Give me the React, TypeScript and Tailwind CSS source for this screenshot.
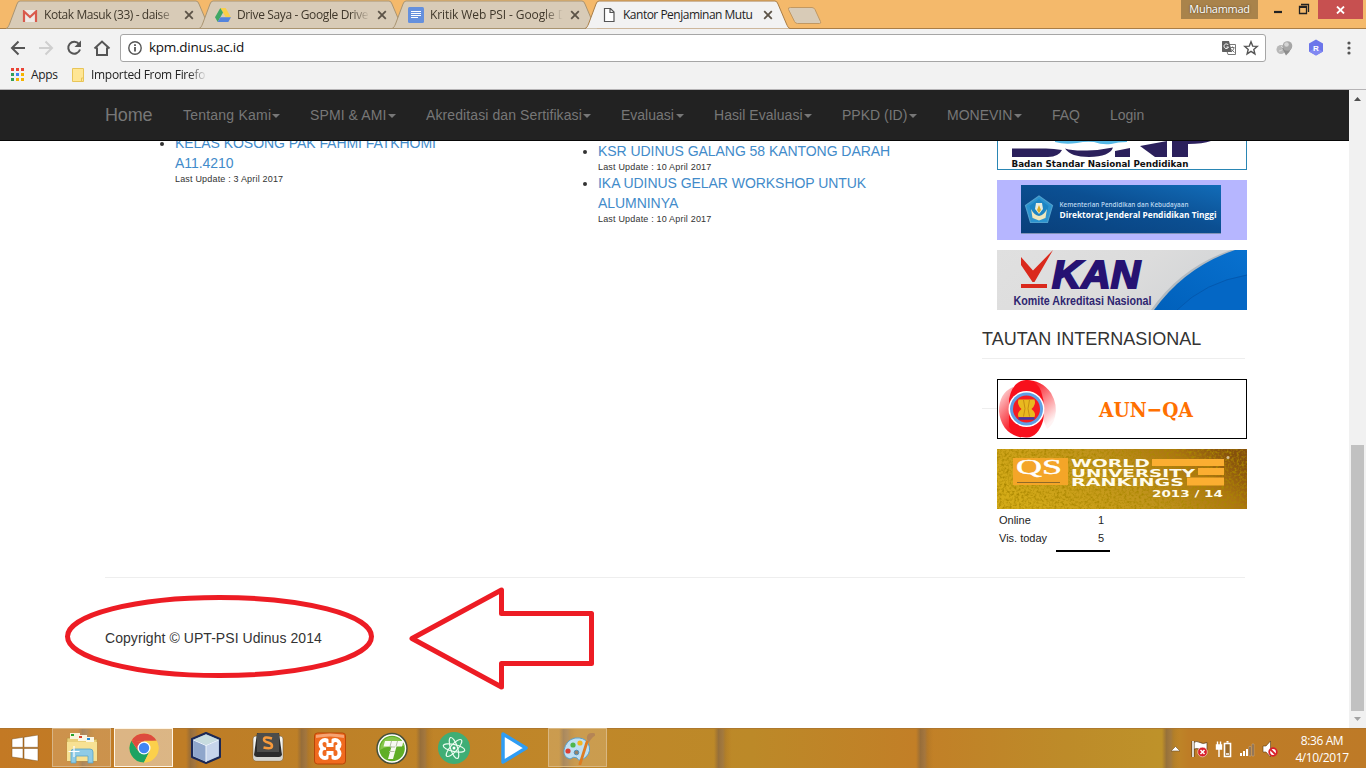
import type { ReactNode } from "react";

const UI = "font-['Open_Sans','Noto_Sans',sans-serif]";
const PAGE = "font-['Liberation_Sans',Arial,sans-serif]";

function Close() {
  return (
    <svg width="10" height="10" viewBox="0 0 10 10" className="shrink-0">
      <path d="M1.2 1.2 8.8 8.8M8.8 1.2 1.2 8.8" stroke="#5c5347" strokeWidth="1.8" />
    </svg>
  );
}

function Tab({ icon, title, track, active }: { icon: ReactNode; title: string; track: string; active?: boolean }) {
  return (
    <div className={`relative h-[29px] w-[193px] shrink-0 ${active ? "z-10" : ""}`}>
      <svg className="absolute top-0 left-0" width="208" height="29" viewBox="0 0 208 29">
        <path
          d="M0 28.5C2 28 2.500 26 3.500 24L11 4Q12 1 14 1H190Q192 1 193 4L201.500 24C202.500 26 203 28 205 28.500Z"
          fill={active ? "#f2f2f2" : "#d8cbb7"}
          stroke={active ? "none" : "#a99471"}
          strokeWidth="1"
        />
        {active && (
          <path
            d="M0 28.500C2 28 2.500 26 3.500 24L11 4Q12 1 14 1H190Q192 1 193 4L201.500 24C202.500 26 203 28 205 28.500"
            fill="none"
            stroke="#a97d46"
          />
        )}
      </svg>
      <div className="relative flex h-[29px] items-center pl-4">
        <div className="flex w-[22px] shrink-0 justify-start">{icon}</div>
        <div
          className={`w-[134px] text-[12px] leading-[16px] whitespace-nowrap ${track} ${active ? "text-[#1e1e1e]" : "text-[#40382b] [mask-image:linear-gradient(to_right,black_85%,transparent_99%)]"}`}
        >
          {title}
        </div>
        <div className="ml-[6px]">
          <Close />
        </div>
      </div>
    </div>
  );
}

function TabStrip() {
  return (
    <div className="flex h-[29px] justify-between border-b border-[#a97d46] bg-[#f4b96b]">
      <div className="flex pl-[6px]">
        <Tab
          title="Kotak Masuk (33) - daise"
          track="tracking-[-0.42px]"
          icon={
            <svg width="16" height="12" viewBox="0 0 16 12" className="mt-[2px]">
              <rect x="1" y="0" width="14" height="12" rx="1" fill="#eee9e6" />
              <path d="M2 12V1.500L8 7l6-5.500V12" fill="none" stroke="#d9594c" strokeWidth="2.200" />
            </svg>
          }
        />
        <Tab
          title="Drive Saya - Google Drive"
          track="tracking-[-0.37px]"
          icon={
            <svg width="16" height="14" viewBox="0 0 16 14">
              <path d="M5.300 0h5.400L16 9.200h-5.300z" fill="#f9cf4a" />
              <path d="M5.300 0 8 4.600 2.700 14 0 9.200z" fill="#3fa765" />
              <path d="M5.400 9.200H16L13.300 14H2.700z" fill="#5484dd" />
            </svg>
          }
        />
        <Tab
          title="Kritik Web PSI - Google D"
          track="tracking-[-0.1px]"
          icon={
            <svg width="16" height="16" viewBox="0 0 16 16">
              <rect width="16" height="16" rx="1.500" fill="#6590dd" />
              <path d="M3 4.500h10M3 6.500h10M3 8.500h10M3 10.500h7" stroke="#fff" />
            </svg>
          }
        />
        <Tab
          active
          title="Kantor Penjaminan Mutu"
          track="tracking-[-0.5px]"
          icon={
            <svg width="16" height="16" viewBox="0 0 16 16" className="ml-[1px]">
              <path d="M2.500 1.500H8.500L12 5v9.500H2.500zM8 1.500V5.500h4" fill="#fff" stroke="#555" strokeWidth="1.200" />
            </svg>
          }
        />
        <svg width="36" height="18" viewBox="0 0 36 18" className="mt-[7px] ml-[9px]">
          <path d="M3.500.5H25Q27 .500 28 2.500L33.500 14.500Q34.500 16.500 32.500 16.500H10.500Q8.500 16.500 7.500 14.500L1.500 2.500Q.5.500 3.500.5Z" fill="#d8cbb7" stroke="#c19862" />
        </svg>
      </div>
      <div className="flex items-start">
        <div className={`${UI} flex h-[19px] w-[77px] items-center justify-center bg-[#a9834b] text-[11px] font-medium tracking-[-0.3px] text-white [text-shadow:0_0_2px_#4d3b1f]`}>
          Muhammad
        </div>
        <svg width="60" height="19" viewBox="0 0 60 19">
          <path d="M16 12h8" stroke="#222" strokeWidth="2.200" />
          <path d="M41.500 6.500h7v7h-7zM43 4.500h7.500V12" fill="none" stroke="#222" strokeWidth="1.300" />
          <path d="M41 7h8" stroke="#222" strokeWidth="2" />
        </svg>
        <div className="mr-[3px] flex h-[19px] w-[45px] items-center justify-center bg-[#c75050]">
          <svg width="9" height="8" viewBox="0 0 9 8">
            <path d="M1 .5 8 7.500M8 .5 1 7.500" stroke="#fff" strokeWidth="1.800" />
          </svg>
        </div>
      </div>
    </div>
  );
}

function Toolbar() {
  return (
    <div className="flex h-[37px] items-center bg-[#f2f2f2] pl-[10px]">
      <svg width="110" height="18" viewBox="0 0 110 18" fill="none" strokeWidth="2" className="shrink-0">
        <path d="M15 9H2.500M8.500 2.500 2 9l6.500 6.500" stroke="#555" />
        <path d="M29 9h12.500M35.500 2.500 42 9l-6.500 6.500" stroke="#cfcfcf" />
        <path d="M69 5A6 6 0 1 0 70 10.500" stroke="#555" />
        <path d="M71 1.500V8h-6.500z" fill="#555" />
        <path d="M84.500 9.500 92 2.500l7.500 7M87 8.500V16h10V8.500" stroke="#555" />
      </svg>
      <div className="flex h-[28px] w-[1146px] items-center rounded-[3px] border border-[#a6a6a6] bg-white pr-[6px] pl-[7px]">
        <svg width="14" height="14" viewBox="0 0 14 14">
          <circle cx="7" cy="7" r="6.200" fill="none" stroke="#555" strokeWidth="1.400" />
          <path d="M7 6v4.500M7 3.200v1.700" stroke="#555" strokeWidth="1.800" />
        </svg>
        <span className="-mt-[2px] ml-[7px] text-[13.500px] leading-[20px] tracking-[-0.26px] text-[#111]">kpm.dinus.ac.id</span>
        <svg width="16" height="16" viewBox="0 0 16 16" className="ml-auto">
          <path d="M8 4.500h6.500v10H7l-1-3" fill="#fff" stroke="#777" />
          <path d="M1.500 1H8l3 11H1.500Q1 12 1 11V2Q1 1 1.500 1Z" fill="#616161" />
          <path d="M7.300 5A2.300 2.300 0 1 0 7.500 7H5.500" fill="none" stroke="#fff" />
          <path d="M9.500 7.500h4M11.500 6.500v1M13 8q-1 3-3 4M10.500 9.500l3 3" fill="none" stroke="#666" strokeWidth=".9" />
        </svg>
        <svg width="16" height="16" viewBox="0 0 16 16" className="ml-[6px]">
          <path d="m8 1.800 1.700 4.300 4.600.3-3.500 3 1.100 4.500L8 11.400l-3.900 2.500 1.100-4.500-3.500-3 4.600-.3z" fill="none" stroke="#555" strokeWidth="1.400" />
        </svg>
      </div>
      <svg width="17" height="16" viewBox="0 0 17 16" className="ml-[10px]">
        <circle cx="5" cy="9.500" r="4.500" fill="#b8b8b8" />
        <path d="M5 6q2 1 1.500 3T3 11" fill="none" stroke="#ddd" />
        <path d="M6 8 16 7q-2 5-6 8.500Q8 12 6 8Z" fill="#8d8d8d" />
        <circle cx="11.500" cy="6" r="4.800" fill="#a6a6a6" />
        <circle cx="10.500" cy="4.500" r="2.300" fill="#d5d5d5" />
      </svg>
      <svg width="16" height="17" viewBox="0 0 16 17" className="ml-[15px]">
        <path d="M8 .5 15 4.500v8L8 16.500 1 12.500v-8z" fill="#6b75ea" />
        <path d="M1 12.500 8 8.500l7 4L8 16.500z" fill="#8188f2" />
        <text x="8" y="11.500" textAnchor="middle" fontSize="8" fontWeight="700" fill="#fff" fontFamily="Liberation Sans">R</text>
      </svg>
      <svg width="4" height="14" viewBox="0 0 4 14" className="ml-[23px]">
        <circle cx="2" cy="2" r="1.600" fill="#555" />
        <circle cx="2" cy="7" r="1.600" fill="#555" />
        <circle cx="2" cy="12" r="1.600" fill="#555" />
      </svg>
    </div>
  );
}

function Bookmarks() {
  const colors = ["#ea4335", "#ea4335", "#ea4335", "#34a058", "#4285f4", "#f5b400", "#34a058", "#f5b400", "#f5b400"];
  return (
    <div className="flex h-[24px] items-start border-b border-[#b6b4b6] bg-[#f2f2f2] pl-[11px] text-[12px] leading-[18px] text-[#222]">
      <svg width="13" height="13" viewBox="0 0 13 13" className="mt-[2px]">
        {colors.map((c, i) => (
          <rect key={i} x={(i % 3) * 5} y={Math.floor(i / 3) * 5} width="3" height="3" fill={c} />
        ))}
      </svg>
      <span className="ml-[7px] w-[27px] tracking-[-0.3px] whitespace-nowrap">Apps</span>
      <svg width="12" height="14" viewBox="0 0 12 14" className="mt-[2px] ml-[14px]">
        <path d="M.5.500h11v13H.5z" fill="#ffe694" stroke="#e8c558" />
        <path d="M9.500 13.500v-3.500h2" fill="none" stroke="#e8c558" />
      </svg>
      <span className="ml-[7px] w-[116px] tracking-[-0.3px] whitespace-nowrap [mask-image:linear-gradient(to_right,black_84%,transparent_100%)]">
        Imported From Firefo
      </span>
    </div>
  );
}

const NAV: [string, string, boolean][] = [
  ["Tentang Kami", "w-[97px] tracking-[0.22px]", true],
  ["SPMI & AMI", "w-[86px] tracking-[0.1px]", true],
  ["Akreditasi dan Sertifikasi", "w-[165px] tracking-[0.1px]", true],
  ["Evaluasi", "w-[63px]", true],
  ["Hasil Evaluasi", "w-[98px] tracking-[0.05px]", true],
  ["PPKD (ID)", "w-[75px]", true],
  ["MONEVIN", "w-[75px]", true],
  ["FAQ", "w-[28px]", false],
  ["Login", "w-[36px]", false],
];

function Navbar() {
  return (
    <nav className="flex h-[51px] shrink-0 items-center border-b border-[#080808] bg-[#222] pl-[105px] text-[14px] text-[#777]">
      <a className="w-[78px] text-[18px] leading-[20px] tracking-[-0.15px]">Home</a>
      <div className="flex gap-[30px]">
        {NAV.map(([label, w, caret]) => (
          <a key={label} className={`flex ${w} items-center justify-between leading-[20px] whitespace-nowrap`}>
            {label}
            {caret && <i className="mt-[2px] border-x-4 border-t-4 border-x-transparent border-t-[#777]" />}
          </a>
        ))}
      </div>
    </nav>
  );
}

function NewsItem({ lines, date }: { lines: string[]; date: string }) {
  return (
    <li>
      <a className="block tracking-[-0.05px] text-[#428bca]">
        {lines.map((l) => (
          <span key={l} className="block whitespace-nowrap">{l}</span>
        ))}
      </a>
      <p className="h-[12px] pt-px text-[9px] leading-[11px] tracking-[0.18px] whitespace-nowrap text-[#333]">Last Update : {date}</p>
    </li>
  );
}

function Bsnp() {
  return (
    <svg width="250" height="60" viewBox="0 0 250 60" className="block shrink-0">
      <rect x=".5" y=".5" width="249" height="59" fill="#fff" stroke="#2a86b4" />
      <path d="M58 30h72v2q-9 0-16 2-9 1-17-2-8-1-17 1-12 2-22-1z" fill="#55b8e6" />
      <g fill="#2b205c">
        <path d="M15 38.500h34q8 0 16 1.500-3 6.500-14 7H15z" />
        <path d="M68 38.500q8 2.500 22 2 14-.5 26-3-3 9-24 9.500-18 0-24-8.500z" />
        <path d="M118 41 133 38V47H118z" />
        <path d="M143 36 170 31V47H158z" />
        <path d="M175 31h39q-8 3-23 3V47h-16z" />
      </g>
      <text x="14.500" y="57" fontSize="9" fontWeight="700" fill="#111" fontFamily="DejaVu Sans, Liberation Sans" textLength="177" lengthAdjust="spacingAndGlyphs">
        Badan Standar Nasional Pendidikan
      </text>
    </svg>
  );
}

function Dikti() {
  return (
    <svg width="250" height="60" viewBox="0 0 250 60" className="block shrink-0">
      <defs>
        <linearGradient id="dk" x1="0" x2="1" y1="1" y2="0">
          <stop offset="0" stopColor="#093f7a" />
          <stop offset=".55" stopColor="#0b4f92" />
          <stop offset="1" stopColor="#126cb8" />
        </linearGradient>
      </defs>
      <rect width="250" height="60" fill="#b6b6ff" />
      <rect x="24" y="5" width="200" height="48" fill="url(#dk)" />
      <path d="M24 53.500h200" stroke="#8193b8" />
      <path d="M42 16 55.500 25.500 50.500 42.500H33.500L28.500 25.500z" fill="#2b93cf" stroke="#4f9fcd" strokeWidth="1.200" />
      <path d="m42 19 9.500 7-3.500 13H36l-3.500-13z" fill="#1c85c4" />
      <path d="M34 29q3 6 8 7 5-1 8-7l-1.500 9-6.500 2.500-6.500-2.500z" fill="#eee6bd" />
      <path d="M39 23h6l1 6-4 5-4-5z" fill="#e6ecdf" />
      <path d="M42 25l2 5-2 3-2-3z" fill="#d9ac29" />
      <g fontFamily="Open Sans, Noto Sans">
        <text x="62.500" y="27" fontSize="7" fontWeight="600" fill="#b9d6ef" textLength="129" lengthAdjust="spacingAndGlyphs">
          Kementerian Pendidikan dan Kebudayaan
        </text>
        <text x="62.500" y="38" fontSize="9.500" fontWeight="700" fill="#fff" textLength="157" lengthAdjust="spacingAndGlyphs">
          Direktorat Jenderal Pendidikan Tinggi
        </text>
      </g>
    </svg>
  );
}

function Kan() {
  return (
    <svg width="250" height="60" viewBox="0 0 250 60" className="block shrink-0">
      <defs>
        <linearGradient id="kg" x1="0" x2="1" y1="0" y2=".3">
          <stop offset="0" stopColor="#e0e0e0" />
          <stop offset=".6" stopColor="#dcdcdc" />
          <stop offset="1" stopColor="#d2d4d6" />
        </linearGradient>
        <linearGradient id="kb" x1="0" x2="1" y1="1" y2="0">
          <stop offset="0" stopColor="#0060bb" />
          <stop offset="1" stopColor="#0871cf" />
        </linearGradient>
      </defs>
      <rect width="250" height="60" fill="url(#kg)" />
      <path d="M154 60Q184 17 234 0H250V60z" fill="#b3bac0" />
      <path d="M157 60Q188 17 238 0H250V60z" fill="url(#kb)" />
      <path d="M180 60Q208 32 250 25V60z" fill="#0467c5" />
      <path d="M180 60Q208 32 250 25" fill="none" stroke="#0459af" />
      <path d="M24 7 36 20.500 56 0 37.500 32H35.500L24 15z" fill="#da291c" />
      <path d="M24 34h26v4H24z" fill="#da291c" />
      <text x="55" y="37.500" fontSize="38" fontWeight="700" fontStyle="italic" fill="#261272" stroke="#261272" strokeWidth="2" fontFamily="Liberation Sans" textLength="88" lengthAdjust="spacingAndGlyphs">
        KAN
      </text>
      <text x="16.500" y="55" fontSize="12" fontWeight="700" fill="#2f2670" fontFamily="Liberation Sans" textLength="138" lengthAdjust="spacingAndGlyphs">
        Komite Akreditasi Nasional
      </text>
    </svg>
  );
}

function AunQa() {
  return (
    <svg width="250" height="60" viewBox="0 0 250 60" className="block">
      <defs>
        <linearGradient id="ar" x1="0" x2=".6" y1="0" y2="1">
          <stop offset=".15" stopColor="#f8101c" />
          <stop offset=".55" stopColor="#fb7f84" />
          <stop offset="1" stopColor="#fff3f3" />
        </linearGradient>
        <linearGradient id="al" x1="0" x2=".7" y1="0" y2="1">
          <stop offset="0" stopColor="#fff0f0" />
          <stop offset=".45" stopColor="#fa6d73" />
          <stop offset=".8" stopColor="#f8101c" />
        </linearGradient>
      </defs>
      <rect x=".5" y=".5" width="249" height="59" fill="#fff" stroke="#000" />
      <path d="M28 1Q45 1 54 14 61 26 58 38 56 46 50 50L38 20z" fill="url(#ar)" />
      <path d="M16 8Q2 14 2 32 4 54 24 58.500L30 30z" fill="url(#al)" />
      <path d="M12 20Q16 1 30 1 40 2 44 12 49 26 46 42 41 58 30 58.500 18 59 12 48z" fill="#f8101c" />
      <circle cx="29.500" cy="30" r="18" fill="#fff" />
      <circle cx="29.500" cy="30" r="16.500" fill="#5f9fe4" />
      <circle cx="29.500" cy="30" r="13.500" fill="#f51c22" />
      <path d="M21.500 20.500h16q2 5-3 9.500 5 4 3 8H21.500q-2-4 3-8-5-4.500-3-9.500z" fill="#e9b91f" />
      <path d="M26.500 21q3 9 0 16.500M32.500 21q-3 9 0 16.500" stroke="#c78d13" fill="none" />
      <path d="M21.500 39.500h16" stroke="#3b3aa8" strokeWidth="2.500" />
      <text x="102" y="38" fontSize="21" fontWeight="700" fill="#ff7000" fontFamily="DejaVu Serif" textLength="94" lengthAdjust="spacingAndGlyphs">
        AUN−QA
      </text>
    </svg>
  );
}

function QsRankings() {
  return (
    <svg width="250" height="60" viewBox="0 0 250 60" className="block">
      <defs>
        <linearGradient id="qs" x1="0" x2="1" y1=".6" y2=".3">
          <stop offset="0" stopColor="#d4ab18" />
          <stop offset=".5" stopColor="#c0931c" />
          <stop offset=".8" stopColor="#ac7511" />
          <stop offset="1" stopColor="#85500c" />
        </linearGradient>
        <filter id="grain" x="0" y="0" width="100%" height="100%">
          <feTurbulence type="fractalNoise" baseFrequency=".4" numOctaves="3" />
          <feColorMatrix values="0 0 0 0 .4  0 0 0 0 .24  0 0 0 0 0  2.400 0 0 0 -1" />
        </filter>
      </defs>
      <rect width="250" height="60" fill="url(#qs)" />
      <rect width="250" height="60" filter="url(#grain)" />
      <path d="M16 9h55v27H16z" fill="#f4a528" />
      <path d="M20 33.500h43" stroke="#8f6a28" />
      <g fill="#fbae31">
        <path d="M155 10h72v7H155zM201 19h26v7H201zM190 28.500h37v8H190z" />
      </g>
      <text x="19" y="24.500" fontSize="20" fill="#fff" stroke="#fff" strokeWidth=".4" fontFamily="Liberation Serif" textLength="46" lengthAdjust="spacingAndGlyphs">QS</text>
      <g fill="#fffbe9" fontFamily="DejaVu Sans" fontWeight="700" fontSize="11">
        <text x="74" y="17.500" textLength="79" lengthAdjust="spacingAndGlyphs">WORLD</text>
        <text x="74" y="27.500" textLength="124" lengthAdjust="spacingAndGlyphs">UNIVERSITY</text>
        <text x="74" y="37" textLength="113" lengthAdjust="spacingAndGlyphs">RANKINGS</text>
        <text x="155" y="48" fontSize="9" textLength="71" lengthAdjust="spacingAndGlyphs">2013 / 14</text>
      </g>
      <circle cx="231" cy="8.500" r="1.500" fill="#d7bf92" />
    </svg>
  );
}

function Sidebar() {
  return (
    <aside className="flex w-[265px] shrink-0 flex-col">
      <div className="-mt-[31px] flex flex-col gap-[10px] pl-[15px]">
        <Bsnp />
        <Dikti />
        <Kan />
      </div>
      <h4 className="mt-[19px] text-[18px] leading-[20px] whitespace-nowrap text-[#333]">TAUTAN INTERNASIONAL</h4>
      <hr className="mt-[9px] mr-[2px] border-[#eee]" />
      <div className="mt-[20px] flex items-center">
        <hr className="-mt-[2px] w-[15px] border-[#eee]" />
        <AunQa />
      </div>
      <div className="mt-[10px] pl-[15px]">
        <QsRankings />
      </div>
      <div className="ml-[17px] grid w-[105px] grid-cols-[1fr_auto] text-[11px] leading-[18px] text-[#222]">
        <span className="mt-[2px]">Online</span>
        <span className="mt-[2px]">1</span>
        <span>Vis. today</span>
        <span>5</span>
      </div>
      <div className="mt-[3px] ml-[74px] h-[2px] w-[54px] bg-black" />
    </aside>
  );
}

function Scrollbar() {
  return (
    <div className="flex w-[17px] shrink-0 flex-col items-center bg-[#f1f1f1]">
      <svg width="17" height="17" viewBox="0 0 17 17">
        <path d="M5 11 8.500 7 12 11z" fill="#505050" />
      </svg>
      <div className="mt-[338px] h-[266px] w-[13px] bg-[#c1c1c1]" />
      <svg width="17" height="17" viewBox="0 0 17 17">
        <path d="M5 6 8.500 10 12 6z" fill="#a3a3a3" />
      </svg>
    </div>
  );
}

function Page() {
  return (
    <div className={`${PAGE} relative flex h-[638px] w-[1349px] flex-col overflow-hidden bg-white text-[14px] leading-[20px] text-[#333]`}>
      <Navbar />
      <main className="flex h-[436px] shrink-0 overflow-hidden pl-[105px]">
        <ul className="-mt-[8px] w-[423px] shrink-0 list-disc pl-[70px]">
          <NewsItem lines={["KELAS KOSONG PAK FAHMI FATKHOMI", "A11.4210"]} date="3 April 2017" />
        </ul>
        <ul className="w-[454px] shrink-0 list-disc pl-[70px]">
          <NewsItem lines={["KSR UDINUS GALANG 58 KANTONG DARAH"]} date="10 April 2017" />
          <NewsItem lines={["IKA UDINUS GELAR WORKSHOP UNTUK", "ALUMNINYA"]} date="10 April 2017" />
        </ul>
        <Sidebar />
      </main>
      <footer className="mr-[104px] ml-[105px] border-t border-[#eee] pt-[50px] tracking-[0.06px]">Copyright © UPT-PSI Udinus 2014</footer>
      <svg className="absolute top-[490px] left-[60px]" width="540" height="115" viewBox="60 580 540 115" fill="none" stroke="#ed1c24" strokeWidth="5" strokeLinejoin="round">
        <ellipse cx="219.500" cy="636.500" rx="152" ry="39" />
        <path d="M412 638.500 501.500 590v23.500h90v50h-90v23.500z" />
      </svg>
    </div>
  );
}

function TaskButton({ children, frame = "border-transparent" }: { children: ReactNode; frame?: string }) {
  return (
    <div className={`flex h-[39px] w-[59px] items-center justify-center border ${frame}`}>
      <svg width="34" height="34" viewBox="0 0 34 34">
        {children}
      </svg>
    </div>
  );
}

function Taskbar() {
  const posts = [84, 192, 303, 422, 565, 720, 922, 1168];
  return (
    <div className={`${UI} relative flex h-[40px] items-start overflow-hidden bg-[linear-gradient(90deg,#c37924_0%,#bd7f27_20%,#c08729_42%,#bc8928_55%,#c27f27_67%,#bd8b29_78%,#be922a_85%,#be7d26_87%,#be7a27_100%)]`}>
      <svg className="absolute top-0 left-0" width="1366" height="40" viewBox="0 0 1366 40">
        <defs>
          <linearGradient id="post">
            <stop offset="0" stopColor="#8a6338" stopOpacity="0" />
            <stop offset=".25" stopColor="#8a6840" stopOpacity=".75" />
            <stop offset=".5" stopColor="#95714a" stopOpacity=".65" />
            <stop offset=".65" stopColor="#9b6c2c" stopOpacity=".35" />
            <stop offset="1" stopColor="#b5761f" stopOpacity="0" />
          </linearGradient>
        </defs>
        {posts.map((x) => (
          <rect key={x} x={x - 6} y="0" width="18" height="40" fill="url(#post)" />
        ))}
        <path d="M0 .5H1366" stroke="#a97331" opacity=".7" />
      </svg>
      <div className="relative flex h-[40px] gap-[3px] pl-px">
        <div className="flex w-[48px] items-center justify-center">
          <svg width="28" height="26" viewBox="0 0 28 26" fill="#fff" stroke="#7d531f" strokeWidth=".5">
            <path d="M1 4 12 2.300V12.300H1zM13 2.200 27 0V12.300H13zM1 13.500H12V23.500L1 22zM13 13.500H27V26L13 23.800z" />
          </svg>
        </div>
        <TaskButton frame="border-[#d8b587] bg-[#ffffff2e]">
          <path d="M2 7h10l2 2h12l6-1v22H2z" fill="#e9cf79" stroke="#b8923f" strokeWidth=".7" />
          <path d="M5 2h10v6H5z" fill="#f8f3da" />
          <path d="M13 4h9v6h-9zM21 6h8v6h-8z" fill="#faf6e2" />
          <path d="M6 3h3v2H6z" fill="#25a329" />
          <path d="M14 5h3v2h-3z" fill="#d6432c" />
          <path d="M22 7h3v2h-3z" fill="#248cdc" />
          <path d="M2 11h30v19H2z" fill="#f7e193" />
          <path d="M6 32V21q0-3 3-3h16q3 0 3 3v11h-5v-7H11v7z" fill="#8ecbe6" stroke="#5aa3c4" strokeWidth=".8" />
          <path d="M9 15v11M3.500 20.500h11" stroke="#fff" strokeWidth="1.200" />
        </TaskButton>
        <TaskButton frame="border-[#fff5e5] bg-[#ffffff70]">
          <circle cx="17" cy="17" r="14.500" fill="#fcd04b" />
          <path d="M4.440 9.750A14.500 14.500 0 0 1 29.560 9.750L17 10.500z" fill="#dd4b3e" />
          <path d="M4.440 9.750A14.500 14.500 0 0 0 17 31.500L22.600 20.300 11.400 20.300z" fill="#1da362" />
          <path d="M29.560 9.750H17L22.630 20.250 17 31.500A14.500 14.500 0 0 0 29.560 9.750z" fill="#fcd04b" />
          <path d="M4.440 9.750 11.400 20.300 17 10.500z" fill="#dd4b3e" />
          <circle cx="17" cy="17" r="6.500" fill="#fff" />
          <circle cx="17" cy="17" r="5.200" fill="#4285f4" />
        </TaskButton>
        <TaskButton>
          <path d="M17 2 31 8V26L17 32 3 26V8z" fill="#a9bfdc" stroke="#1b2855" strokeWidth="2" strokeLinejoin="round" />
          <path d="M17 3.500 29 8.500 17 14 5 8.500z" fill="#c8dcdf" />
          <path d="M4.500 9 17 14.500V30.500L4.500 25z" fill="#8fa6cb" />
          <path d="M29.500 9 17 14.500V30.500L29.500 25z" fill="#c6d4eb" />
          <path d="M17 14v17M4.500 9 17 14.500 29.500 9" stroke="#eef4fa" fill="none" />
        </TaskButton>
        <TaskButton>
          <rect x="2" y="5" width="30" height="25" rx="3" fill="#f3f3ee" stroke="#776040" strokeWidth=".6" />
          <path d="M3 25h28v4H3z" fill="#d5d5d0" />
          <path d="M6 2h22l3 22q-1 2-3 2H6q-2 0-3-2z" fill="#2c2c2c" />
          <path d="M6 3q0-1 2-1h18q2 0 2 1v18H6z" fill="#4d4d4b" />
          <path d="M21 7.500q-8-2.500-8 1 0 2 4 3 4 1 4 3.500 0 3.500-8.500 1.500" stroke="#f79a3c" strokeWidth="2.500" fill="none" />
        </TaskButton>
        <TaskButton>
          <rect x="1.500" y="2" width="31" height="31" rx="3" fill="#f06a1e" stroke="#b84708" />
          <path d="M3 4q14-3 28 0v3q-14-3-28 0z" fill="#f6a473" />
          <g fill="#fff">
            <circle cx="12" cy="13.500" r="6.500" />
            <circle cx="22" cy="13.500" r="6.500" />
            <circle cx="12" cy="22.500" r="6.500" />
            <circle cx="22" cy="22.500" r="6.500" />
            <path d="M11 12h12v12H11z" />
          </g>
          <g fill="#f06a1e">
            <path d="M15.500 6.500h3v5.500h-3zM15.500 24h3v6h-3z" />
            <path d="M9.500 12.500q0-1.500 2-1.500t2 1.500V16h7V12.500q0-1.500 2-1.500t2 1.500-2 1.800V19q2 0 2 3t-2 3-2-1.500V20h-7v3.500q0 1.500-2 1.500t-2-3 2-3h1.500v-2.500q-3.500 0-3.500-4z" />
            <path d="M4 16.500 6.500 18 4 19.500zM30 16.500 27.500 18 30 19.500z" />
          </g>
        </TaskButton>
        <TaskButton>
          <circle cx="17" cy="17.500" r="15" fill="#fff" stroke="#46503a" strokeWidth="1.500" />
          <circle cx="17" cy="17.500" r="12.800" fill="#5fae26" />
          <path d="M5 19a12.500 12.500 0 0 1 24.500-4Q15 13 5 19z" fill="#86c64c" />
          <path d="M10 10h18.500l-1.500 5.500h-5.500L18 28h-5l3.500-12.500h-8z" fill="#f7f9f2" />
          <path d="M16.500 10 15 15.500M22.500 10 21 15.500M14 20.500h5.500M15 16h5" stroke="#b5c0a8" />
        </TaskButton>
        <TaskButton>
          <circle cx="17" cy="17" r="16" fill="#3fae75" />
          <g fill="none" stroke="#e9fbef" strokeWidth="1.200">
            <ellipse cx="17" cy="17" rx="3.500" ry="11" transform="rotate(-18 17 17)" />
            <ellipse cx="17" cy="17" rx="3.500" ry="11" transform="rotate(42 17 17)" />
            <ellipse cx="17" cy="17" rx="3.500" ry="11" transform="rotate(102 17 17)" />
          </g>
          <circle cx="17" cy="17" r="1.500" fill="#fff" />
        </TaskButton>
        <TaskButton>
          <path d="M4 3 27 17 4 31z" fill="#fff" stroke="#2f9df4" strokeWidth="3.500" strokeLinejoin="round" />
        </TaskButton>
        <TaskButton frame="border-[#d9b781] bg-[#ffffff2e]">
          <path d="M14 7q9-1 13 5 4 8-2 14-7 6-9 1-3-2-7 1-7-2-6-9 2-10 11-12z" fill="#bfe0f3" stroke="#5c9fc6" />
          <circle cx="7" cy="20" r="2.600" fill="#dc3e35" />
          <circle cx="12" cy="14" r="2.600" fill="#4fb64b" />
          <circle cx="19" cy="12" r="2.600" fill="#f1b624" />
          <circle cx="15.500" cy="21.500" r="2.300" fill="#95836b" stroke="#4d91ba" />
          <path d="M26 11 19 33" stroke="#dd7c23" strokeWidth="2.800" strokeLinecap="round" />
          <path d="M26 8q-1-7 7-6 3 2-1 4-3 3-4.500 6z" fill="#b58555" />
        </TaskButton>
      </div>
      <div className="relative ml-auto flex h-[40px] items-center pt-[2px]">
        <svg width="110" height="20" viewBox="0 0 110 20">
          <path d="M2 12 6.500 7.500 11 12z" fill="#fff" stroke="#70512a" strokeWidth=".6" />
          <path d="M24 3.500q4-2 7 0t7 0v7q-4 2-7 0t-7 0z" fill="#fff" stroke="#553a1a" strokeWidth=".7" />
          <path d="M24 2v16" stroke="#553a1a" strokeWidth="3" />
          <path d="M24 2v16" stroke="#fff" strokeWidth="1.600" />
          <circle cx="33.500" cy="13" r="4.800" fill="#d9202b" stroke="#fff" strokeWidth=".5" />
          <path d="m31.500 11 4 4m0-4-4 4" stroke="#fff" strokeWidth="1.500" />
          <path d="M47.500 6h5v4h-5zM48.500 2.500V6M51.500 2.500V6M50 10v8" stroke="#fff" strokeWidth="1.400" fill="#fff" />
          <path d="M55.500 4.500h6v13h-6zM57.500 2.800h2" stroke="#fff" strokeWidth="1.600" fill="#9a6a2a" />
          <path d="M57 15h3" stroke="#fff" strokeWidth="1.500" />
          <path d="M71 14h2v3h-2zM74 12h2v5h-2zM77 10h2v7h-2z" fill="#fff" />
          <path d="M80 7.500h2v9.500h-2zM83 5h2v12h-2z" fill="#816445" stroke="#c9b394" strokeWidth=".5" />
          <path d="M94 7h3l4.500-5v16L97 13h-3z" fill="#fff" stroke="#553a1a" strokeWidth=".6" />
          <circle cx="104" cy="13" r="3.800" fill="#fff" stroke="#d9202b" strokeWidth="1.800" />
          <path d="m101.500 10.500 5 5" stroke="#d9202b" strokeWidth="1.800" />
        </svg>
        <div className="mr-[15px] ml-[14px] w-[58px] text-center text-[12px] leading-[17px] tracking-[-0.4px] whitespace-nowrap text-white">
          <div>8:36 AM</div>
          <div>4/10/2017</div>
        </div>
      </div>
    </div>
  );
}

export default function App() {
  return (
    <div className={`${UI} flex h-[768px] w-[1366px] flex-col overflow-hidden bg-white`}>
      <TabStrip />
      <Toolbar />
      <Bookmarks />
      <div className="flex h-[638px] shrink-0">
        <Page />
        <Scrollbar />
      </div>
      <Taskbar />
    </div>
  );
}
